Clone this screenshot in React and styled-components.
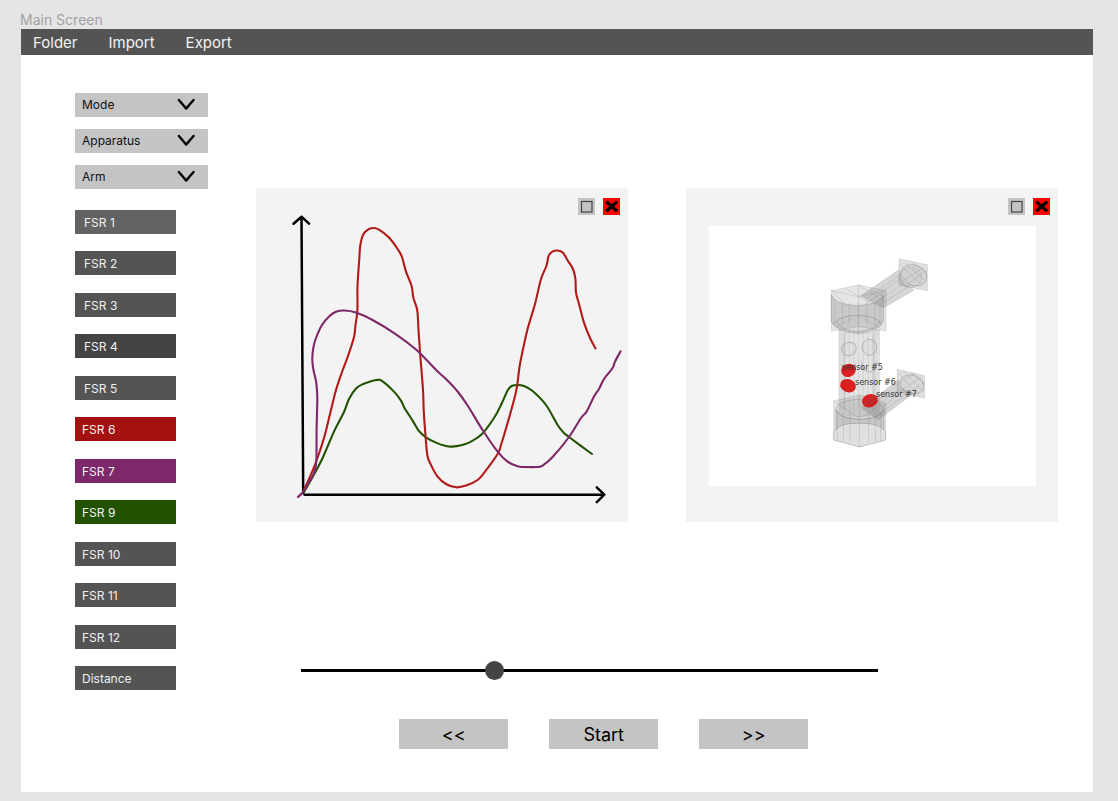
import React, { useState } from 'react';
import styled, { createGlobalStyle } from 'styled-components';

const GlobalStyle = createGlobalStyle`
  *, *::before, *::after { box-sizing: border-box; }
  body {
    margin: 0;
    background: #e5e5e5;
    font-family: Inter, "Liberation Sans", sans-serif;
    color: #000;
  }
  button, select, input { font-family: inherit; margin: 0; }
`;

const Page = styled.div`
  padding: 10px 25px 9px 20px;
`;

const FrameTitle = styled.h1`
  margin: 0;
  font-size: 14px;
  line-height: 19px;
  font-weight: 400;
  color: #a2a2a2;
`;

const Frame = styled.div`
  margin-left: 1px;
  background: #fff;
`;

const MenuBar = styled.nav`
  display: flex;
  align-items: center;
  gap: 31px;
  height: 26px;
  padding: 2px 12px 0;
  background: #545454;
`;

const MenuItem = styled.button`
  border: 0;
  padding: 0;
  background: none;
  color: #f2f2f2;
  font-size: 15px;
  line-height: 24px;
`;

const Body = styled.div`
  display: flex;
  gap: 48px;
  padding: 38px 35px 43px 54px;
`;

const Sidebar = styled.aside`
  flex: 0 0 133px;
  display: flex;
  flex-direction: column;
`;

const SelectStack = styled.div`
  display: flex;
  flex-direction: column;
  gap: 12px;
  margin-bottom: 21px;
`;

const SelectBox = styled.div`
  display: grid;
  grid-template-columns: 1fr 18px;
  align-items: center;
  padding-right: 13px;
  background: #c4c4c4;

  svg {
    grid-area: 1 / 2;
    pointer-events: none;
  }
`;

const Select = styled.select`
  grid-area: 1 / 1 / 2 / 3;
  appearance: none;
  height: 24px;
  width: 100%;
  border: 0;
  border-radius: 0;
  padding: 0 7px 2px;
  background: transparent;
  color: #111;
  font-size: 12px;
`;

const SensorList = styled.div`
  display: flex;
  flex-direction: column;
  align-items: flex-start;
  justify-content: space-between;
  min-height: 480px;
`;

const SensorButton = styled.button`
  width: 101px;
  height: 24px;
  border: 0;
  padding: 2px ${(p) => (p.$indented ? 9 : 7)}px 0;
  background: ${(p) => p.$color};
  color: #f0f0f0;
  font-size: 12px;
  line-height: 22px;
  text-align: left;
`;

const Main = styled.main`
  flex: 1;
  min-width: 0;
  padding-top: 95px;
`;

const Panels = styled.div`
  display: grid;
  grid-template-columns: 1fr 1fr;
  gap: 58px;
`;

const Panel = styled.section`
  background: #f3f3f3;

  > svg { display: block; width: 100%; height: auto; }
`;

const PanelHeader = styled.header`
  display: flex;
  justify-content: flex-end;
  gap: 8px;
  padding: 10px 8px 0;
`;

const WindowButton = styled.button`
  display: block;
  width: 17px;
  height: 17px;
  border: 0;
  padding: 0;
  background: ${(p) => p.$color};

  svg { display: block; }
`;

const ModelView = styled.div`
  padding: 11px 22px 36px 23px;

  svg { display: block; width: 100%; height: auto; background: #fff; }
`;

const Controls = styled.div`
  width: 72%;
  margin: 138px 0 0 45px;
`;

const Timeline = styled.input`
  appearance: none;
  display: block;
  width: 100%;
  height: 21px;
  background: transparent;

  &::-webkit-slider-runnable-track {
    height: 3px;
    background: #000;
  }
  &::-webkit-slider-thumb {
    appearance: none;
    width: 19px;
    height: 19px;
    margin-top: -8px;
    border-radius: 50%;
    background: #444;
  }
`;

const Transport = styled.div`
  display: flex;
  justify-content: center;
  gap: 41px;
  margin-top: 38px;
  padding-left: 28px;
`;

const TransportButton = styled.button`
  width: 109px;
  height: 30px;
  border: 0;
  padding: 0;
  background: #c4c4c4;
  color: #000;
  font-size: 18px;
`;

const SELECTS = ['Mode', 'Apparatus', 'Arm'];

const SENSORS = [
  { name: 'FSR 1', color: '#636363', indented: true },
  { name: 'FSR 2', color: '#545454', indented: true },
  { name: 'FSR 3', color: '#545454', indented: true },
  { name: 'FSR 4', color: '#444444', indented: true },
  { name: 'FSR 5', color: '#545454', indented: true },
  { name: 'FSR 6', color: '#a31210' },
  { name: 'FSR 7', color: '#7d2868' },
  { name: 'FSR 9', color: '#225200' },
  { name: 'FSR 10', color: '#545454' },
  { name: 'FSR 11', color: '#545454' },
  { name: 'FSR 12', color: '#545454' },
  { name: 'Distance', color: '#545454' },
];

const RED = [[303, 492], [309, 479], [316, 462], [324, 438], [330, 414], [336, 390], [342, 372], [348, 356], [354, 337], [355.5, 325], [357.4, 310], [357.5, 286], [359.3, 259], [360.2, 246], [363, 235], [367.5, 229.8], [373, 228], [379, 229.6], [389, 237.6], [397.6, 249], [402, 257], [406, 271.6], [411.6, 286], [413.3, 297.6], [417.2, 310], [418.5, 330], [420, 352], [423, 390], [423.7, 410], [425.6, 437], [427.5, 456], [431, 465], [437.6, 476.6], [446, 484], [456, 487.3], [466, 485.6], [477.6, 480], [485, 471.6], [497.6, 454], [501, 445], [507.6, 423], [514, 400], [517, 386.6], [519.5, 367], [522, 354], [527.6, 329], [535, 304], [541, 279], [546.4, 266], [548.6, 256], [552, 251.8], [557.6, 250.5], [563, 252.8], [568, 261], [573, 269], [575.4, 279], [576, 292.6], [579, 304], [584, 322.6], [590, 338], [595.5, 348.5]];
const PURPLE = [[298, 497], [303, 492], [308, 484], [314, 473], [316.3, 461], [316.6, 430], [317.3, 400], [316.8, 388], [315.8, 380], [313.5, 370], [312.3, 360], [313.3, 348], [316, 338], [322, 325], [329.3, 316.3], [336, 311.8], [344.3, 310.5], [356, 312.5], [372.6, 320], [396, 334.3], [416, 349.5], [427.6, 361], [437.6, 371.5], [446, 379], [457.6, 391.5], [467.6, 405.5], [482.6, 430], [497.6, 451.6], [507.6, 461.6], [517.6, 466.3], [524, 467], [537.6, 467], [542.6, 465.6], [552.6, 457], [569, 437], [581, 418], [586.6, 411.6], [594, 396.6], [599, 389], [604, 379], [612.6, 368], [615, 361.6], [620.6, 351.3]];
const GREEN = [[304, 492], [312.6, 477], [322.6, 458], [334, 431.6], [344, 412], [349, 399], [356, 388.5], [362.6, 384.3], [376.6, 380], [382.6, 381.3], [394, 391.6], [401, 400.6], [404.5, 408], [412.6, 420.6], [418.6, 430.6], [426, 437.3], [436, 442.6], [446, 446], [452, 446.6], [461, 445.3], [471, 441.6], [482, 434], [494, 418], [501, 405], [507.6, 390.5], [511.6, 386], [517.6, 385], [524, 386], [532.6, 391], [546, 405], [557.6, 425], [563.5, 432.5], [569, 437], [592, 454]];

// Smooth path through a list of points (Catmull-Rom converted to Bezier).
function smooth(points) {
  let d = `M${points[0]}`;
  for (let i = 0; i < points.length - 1; i++) {
    const a = points[Math.max(i - 1, 0)];
    const b = points[i];
    const c = points[i + 1];
    const e = points[Math.min(i + 2, points.length - 1)];
    d += `C${b[0] + (c[0] - a[0]) / 6},${b[1] + (c[1] - a[1]) / 6} ${c[0] - (e[0] - b[0]) / 6},${c[1] - (e[1] - b[1]) / 6} ${c[0]},${c[1]}`;
  }
  return d;
}

function Chevron() {
  return (
    <svg width="18" height="14" viewBox="0 0 18 14" fill="none" stroke="#000" strokeWidth="2.4" strokeLinecap="round" strokeLinejoin="round" aria-hidden="true">
      <path d="M1.9 2L9.1 10.6L16.5 2" />
    </svg>
  );
}

function WindowControls() {
  return (
    <PanelHeader>
      <WindowButton $color="#c4c4c4" aria-label="Maximize">
        <svg width="17" height="17" viewBox="0 0 17 17" fill="none" stroke="#444" aria-hidden="true">
          <rect x="3.5" y="3.5" width="10.5" height="10.5" strokeWidth="1.2" />
        </svg>
      </WindowButton>
      <WindowButton $color="#ff0000" aria-label="Close">
        <svg width="17" height="17" viewBox="0 0 17 17" fill="none" stroke="#000" strokeWidth="3.2" aria-hidden="true">
          <path d="M3.3 3.6L14.1 13.2M14.1 3.6L3.3 13.2" />
        </svg>
      </WindowButton>
    </PanelHeader>
  );
}

function Chart() {
  return (
    <svg viewBox="256 215 372 307" fill="none" strokeLinecap="round" strokeLinejoin="round" role="img" aria-label="Sensor readings">
      <g stroke="#000" strokeWidth="2.5">
        <path d="M301.5 217L303.2 493M293.5 223.7L301.5 216.7L309 223.7" />
        <path d="M304.5 494.7H604M596.8 487.3L604.3 494.7L596.8 502.2" />
      </g>
      <g strokeWidth="2.1">
        <path d={smooth(GREEN)} stroke="#225200" />
        <path d={smooth(RED)} stroke="#b01a18" />
        <path d={smooth(PURPLE)} stroke="#7d2868" />
      </g>
    </svg>
  );
}

function Model() {
  const ribs = [64, 76, 88, 101, 116, 130, 145, 158, 169];
  return (
    <svg viewBox="709 226 327 260" role="img" aria-label="Sensor model">
      <g transform="translate(820 250) scale(0.3333)" stroke="#777" strokeOpacity="0.32" strokeWidth="2" fill="#888" fillOpacity="0.2">
        {/* central tube */}
        <path d="M57 240V490Q113 510 178 490V240Q113 260 57 240Z" fillOpacity="0.24" />
        <path d="M72 250V480M162 250V480" fill="none" strokeWidth="6" strokeOpacity="0.18" />
        {ribs.map((x) => <path key={x} d={`M${x} 240V480`} fill="none" strokeWidth="1.5" strokeOpacity="0.28" />)}
        <g fillOpacity="0.04" strokeOpacity="0.6">
          <ellipse cx="87" cy="297" rx="22" ry="20" transform="rotate(-20 87 297)" />
          <ellipse cx="148" cy="292" rx="22" ry="24" />
          <path d="M124 335Q128 366 148 366Q168 366 172 335M64 340Q70 368 88 366Q104 362 108 338" fill="none" />
        </g>

        {/* upper arm and its end plate */}
        <path d="M122 138L236 60Q232 94 282 120L190 174Z" fillOpacity="0.34" />
        <path d="M140 145L240 76M151 150L242 85M165 158L252 100M180 164L266 110M130 165L190 130M150 120L190 140" fill="none" />
        <path d="M237 27L322 44V122L237 105Z" fillOpacity="0.26" />
        <ellipse cx="281" cy="76" rx="40" ry="31" transform="rotate(18 281 76)" fillOpacity="0.1" strokeOpacity="0.5" />
        <ellipse cx="272" cy="82" rx="34" ry="30" fillOpacity="0.08" />
        <path d="M242 45L310 110M255 40L320 94M274 37L321 70M240 75L275 107M245 95L310 52M258 107L320 60" fill="none" />

        {/* upper collar */}
        <path d="M34 122L115 105L198 122V243L115 230L34 243Z" fillOpacity="0.22" />
        <path d="M34 122L115 140L198 122M115 105V255" fill="none" />
        <path d="M34 135Q45 164 113 167Q180 164 190 135V215Q180 242 113 248Q45 242 34 215Z" fillOpacity="0.3" strokeOpacity="0.5" />
        <path d="M44 220Q58 198 113 196Q168 198 184 220" fill="none" strokeOpacity="0.6" />
        <path d="M50 214Q62 244 113 244Q166 244 178 214" fill="none" strokeOpacity="0.6" />
        <path d="M56 238Q113 262 172 238" fill="none" strokeWidth="3" />
        {[44, 67, 88, 115, 140, 165, 180].map((x) => <path key={x} d={`M${x} 158V224`} fill="none" />)}
        <path d="M34 122L76 164M76 115L155 163M115 105L190 152M46 233L98 204M180 235L130 203" fill="none" />

        {/* lower arm and its end plate */}
        <path d="M125 474L235 389Q232 420 280 430L175 509Z" fillOpacity="0.36" />
        <path d="M140 478L240 400M148 487L242 412M158 495L252 420M166 501L267 427" fill="none" />
        <path d="M232 358L314 377V445L232 425Z" fillOpacity="0.26" />
        <ellipse cx="276" cy="403" rx="36" ry="28" transform="rotate(20 276 403)" fillOpacity="0.1" strokeOpacity="0.5" />
        <path d="M235 370L300 438M250 364L312 425M275 369L313 403M234 400L285 369M242 422L307 379M264 430L314 397" fill="none" />

        {/* lower collar */}
        <path d="M41 453L120 435L197 460V570L118 591L41 570Z" fillOpacity="0.22" />
        <path d="M47 478Q58 502 120 508Q182 502 192 478V540Q175 518 118 520Q60 518 47 540Z" fillOpacity="0.34" />
        <path d="M41 570V545Q60 518 118 520Q175 518 197 545V570L118 591Z" fillOpacity="0.05" />
        <ellipse cx="119" cy="478" rx="71" ry="30" fillOpacity="0.1" strokeOpacity="0.5" />
        <path d="M41 453L118 505L197 460M118 435V591" fill="none" />
        {[52, 70, 90, 146, 166, 182].map((x) => <path key={x} d={`M${x} 482V575`} fill="none" />)}
      </g>
      <g fill="#d90b0b" fillOpacity="0.9">
        <ellipse cx="848.5" cy="370.3" rx="7.5" ry="6.5" transform="rotate(-20 848.5 370.3)" />
        <ellipse cx="848" cy="385.7" rx="8" ry="6.5" transform="rotate(20 848 385.7)" />
        <ellipse cx="870" cy="400.7" rx="8" ry="6.5" transform="rotate(-20 870 400.7)" />
      </g>
      <path d="M864 404L877 395M866 406L877 399" stroke="#666" strokeOpacity="0.6" />
      <g fill="#333" fontSize="8" fontFamily='"DejaVu Sans", sans-serif'>
        <text x="842" y="370">sensor #5</text>
        <text x="855" y="385">sensor #6</text>
        <text x="876" y="397">sensor #7</text>
      </g>
    </svg>
  );
}

export default function App() {
  const [position, setPosition] = useState(33);

  return (
    <Page>
      <GlobalStyle />
      <FrameTitle>Main Screen</FrameTitle>
      <Frame>
        <MenuBar>
          <MenuItem>Folder</MenuItem>
          <MenuItem>Import</MenuItem>
          <MenuItem>Export</MenuItem>
        </MenuBar>
        <Body>
          <Sidebar>
            <SelectStack>
              {SELECTS.map((name) => (
                <SelectBox key={name}>
                  <Select aria-label={name}>
                    <option>{name}</option>
                  </Select>
                  <Chevron />
                </SelectBox>
              ))}
            </SelectStack>
            <SensorList>
              {SENSORS.map((s) => (
                <SensorButton key={s.name} $color={s.color} $indented={s.indented}>{s.name}</SensorButton>
              ))}
            </SensorList>
          </Sidebar>
          <Main>
            <Panels>
              <Panel>
                <WindowControls />
                <Chart />
              </Panel>
              <Panel>
                <WindowControls />
                <ModelView>
                  <Model />
                </ModelView>
              </Panel>
            </Panels>
            <Controls>
              <Timeline
                type="range"
                min="0"
                max="100"
                value={position}
                onChange={(e) => setPosition(Number(e.target.value))}
                aria-label="Playback position"
              />
              <Transport>
                <TransportButton aria-label="Previous">&lt;&lt;</TransportButton>
                <TransportButton>Start</TransportButton>
                <TransportButton aria-label="Next">&gt;&gt;</TransportButton>
              </Transport>
            </Controls>
          </Main>
        </Body>
      </Frame>
    </Page>
  );
}
